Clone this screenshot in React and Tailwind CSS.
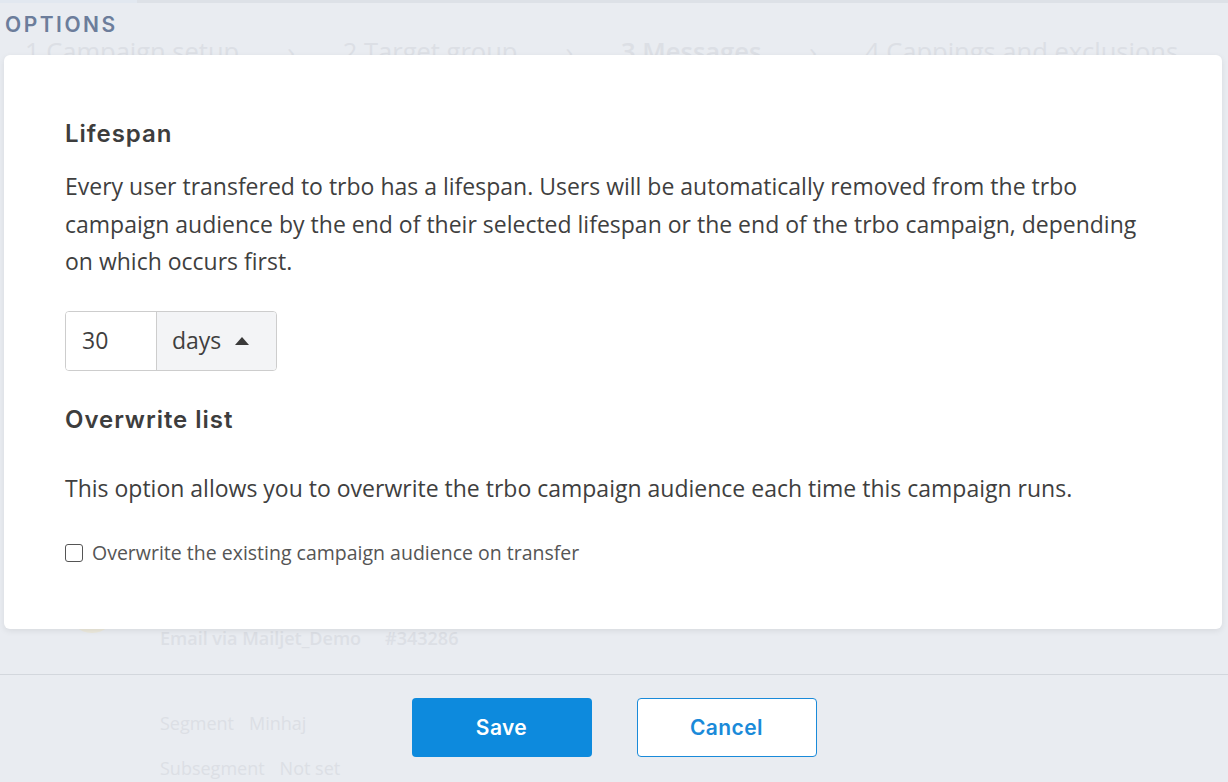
import { useState } from 'react';

const heading = { fontFamily: 'Inter, "Open Sans", sans-serif' };

function PageBehind() {
  // the campaign page sitting underneath the options dialog
  return (
    <div className="absolute inset-0 flex flex-col text-[#dcdfe5]" style={{ fontFamily: '"Open Sans", sans-serif' }}>
      <div className="flex h-[3px] shrink-0">
        <div className="w-[137px] bg-[#e2e8f0]" />
        <div className="flex-1 bg-[#dde1e7]" />
      </div>
      <div className="mt-[35px] flex items-center pl-[25px] text-[25.5px] leading-[26px]">
        <span>1 Campaign setup</span>
        <span className="mx-[48px]">›</span>
        <span>2 Target group</span>
        <span className="mx-[48px]">›</span>
        <span className="font-semibold">3 Messages</span>
        <span className="mx-[48px]">›</span>
        <span>4 Cappings and exclusions</span>
      </div>
      <div className="mt-[561px] flex items-start pl-[68px]">
        <div className="mt-[-40px] h-[48px] w-[48px] rounded-full bg-[#ece9dc]" />
        <div className="ml-[44px] flex gap-[24px] text-[18px] font-semibold leading-[26px]">
          <span>Email via Mailjet_Demo</span>
          <span>#343286</span>
        </div>
      </div>
      <div className="mt-[59px] flex gap-[15px] pl-[160px] text-[18px] leading-[26px]">
        <span>Segment</span>
        <span>Minhaj</span>
      </div>
      <div className="mt-[19px] flex gap-[15px] pl-[160px] text-[18px] leading-[26px]">
        <span>Subsegment</span>
        <span>Not set</span>
      </div>
    </div>
  );
}

export default function App() {
  const [days, setDays] = useState('30');
  const [overwrite, setOverwrite] = useState(false);

  return (
    <div className="relative h-[782px] w-full overflow-hidden bg-[#e9ecf1]">
      <PageBehind />

      <div className="relative flex flex-col">
        <h1
          className="mt-[14px] pl-[5px] text-[21px] font-semibold leading-[22px] tracking-[0.12em] text-[#6c7d9b]"
          style={heading}
        >
          OPTIONS
        </h1>

        <div
          className="ml-[4px] mr-[6px] mt-[19px] h-[574px] rounded-[6px] bg-white px-[61px] pt-[64px] text-[#3f3f3f] shadow-[0_2px_6px_rgba(0,0,0,0.08)]"
          style={{ fontFamily: '"Open Sans", sans-serif' }}
        >
          <h2 className="text-[24px] font-semibold leading-[30px] tracking-[0.04em] text-[#3d3d3d]" style={heading}>
            Lifespan
          </h2>
          <p className="mt-[19px] text-[23px] leading-[37.5px]">
            Every user transfered to trbo has a lifespan. Users will be automatically removed from the trbo
            <br />
            campaign audience by the end of their selected lifespan or the end of the trbo campaign, depending
            <br />
            on which occurs first.
          </p>

          <div className="mt-[30px] flex h-[60px] w-[212px] overflow-hidden rounded-[4px] border border-[#cdcdcd] text-[23px]">
            <input
              value={days}
              onChange={(e) => setDays(e.target.value)}
              className="w-[90px] bg-white pl-[16px] text-[#3f3f3f] outline-none"
            />
            <div className="flex flex-1 items-center gap-[14px] border-l border-[#cdcdcd] bg-[#f3f4f6] pl-[15px] text-[#3f3f3f]">
              <span>days</span>
              <svg width="14" height="8" viewBox="0 0 14 8">
                <path d="M7 0 L14 8 L0 8 Z" fill="#3a3a3a" />
              </svg>
            </div>
          </div>

          <h2 className="mt-[34px] text-[24px] font-semibold leading-[30px] tracking-[0.04em] text-[#3d3d3d]" style={heading}>
            Overwrite list
          </h2>
          <p className="mt-[35px] text-[23px] leading-[37.5px]">
            This option allows you to overwrite the trbo campaign audience each time this campaign runs.
          </p>

          <label className="mt-[34px] flex cursor-pointer items-center gap-[9px] text-[19.5px] leading-[24px] text-[#555]">
            <span
              onClick={() => setOverwrite(!overwrite)}
              className="flex h-[18px] w-[18px] items-center justify-center rounded-[3px] border-[1.5px] border-[#555] bg-white"
            >
              {overwrite && (
                <svg width="11" height="9" viewBox="0 0 11 9">
                  <path d="M1 4.5 L4 7.5 L10 1" stroke="#555" strokeWidth="2" fill="none" />
                </svg>
              )}
            </span>
            Overwrite the existing campaign audience on transfer
          </label>
        </div>

        <div className="mt-[45px] flex justify-center gap-[45px] border-t border-[#d3d7dd] pt-[23px]" style={heading}>
          <button className="h-[59px] w-[180px] rounded-[4px] bg-[#0d8add] pt-[1px] text-[21px] font-semibold tracking-[0.02em] text-white">
            Save
          </button>
          <button className="h-[59px] w-[180px] rounded-[4px] border border-[#1a8ad9] bg-white pt-[1px] text-[21px] font-semibold tracking-[0.02em] text-[#1a8ad9]">
            Cancel
          </button>
        </div>
      </div>
    </div>
  );
}
